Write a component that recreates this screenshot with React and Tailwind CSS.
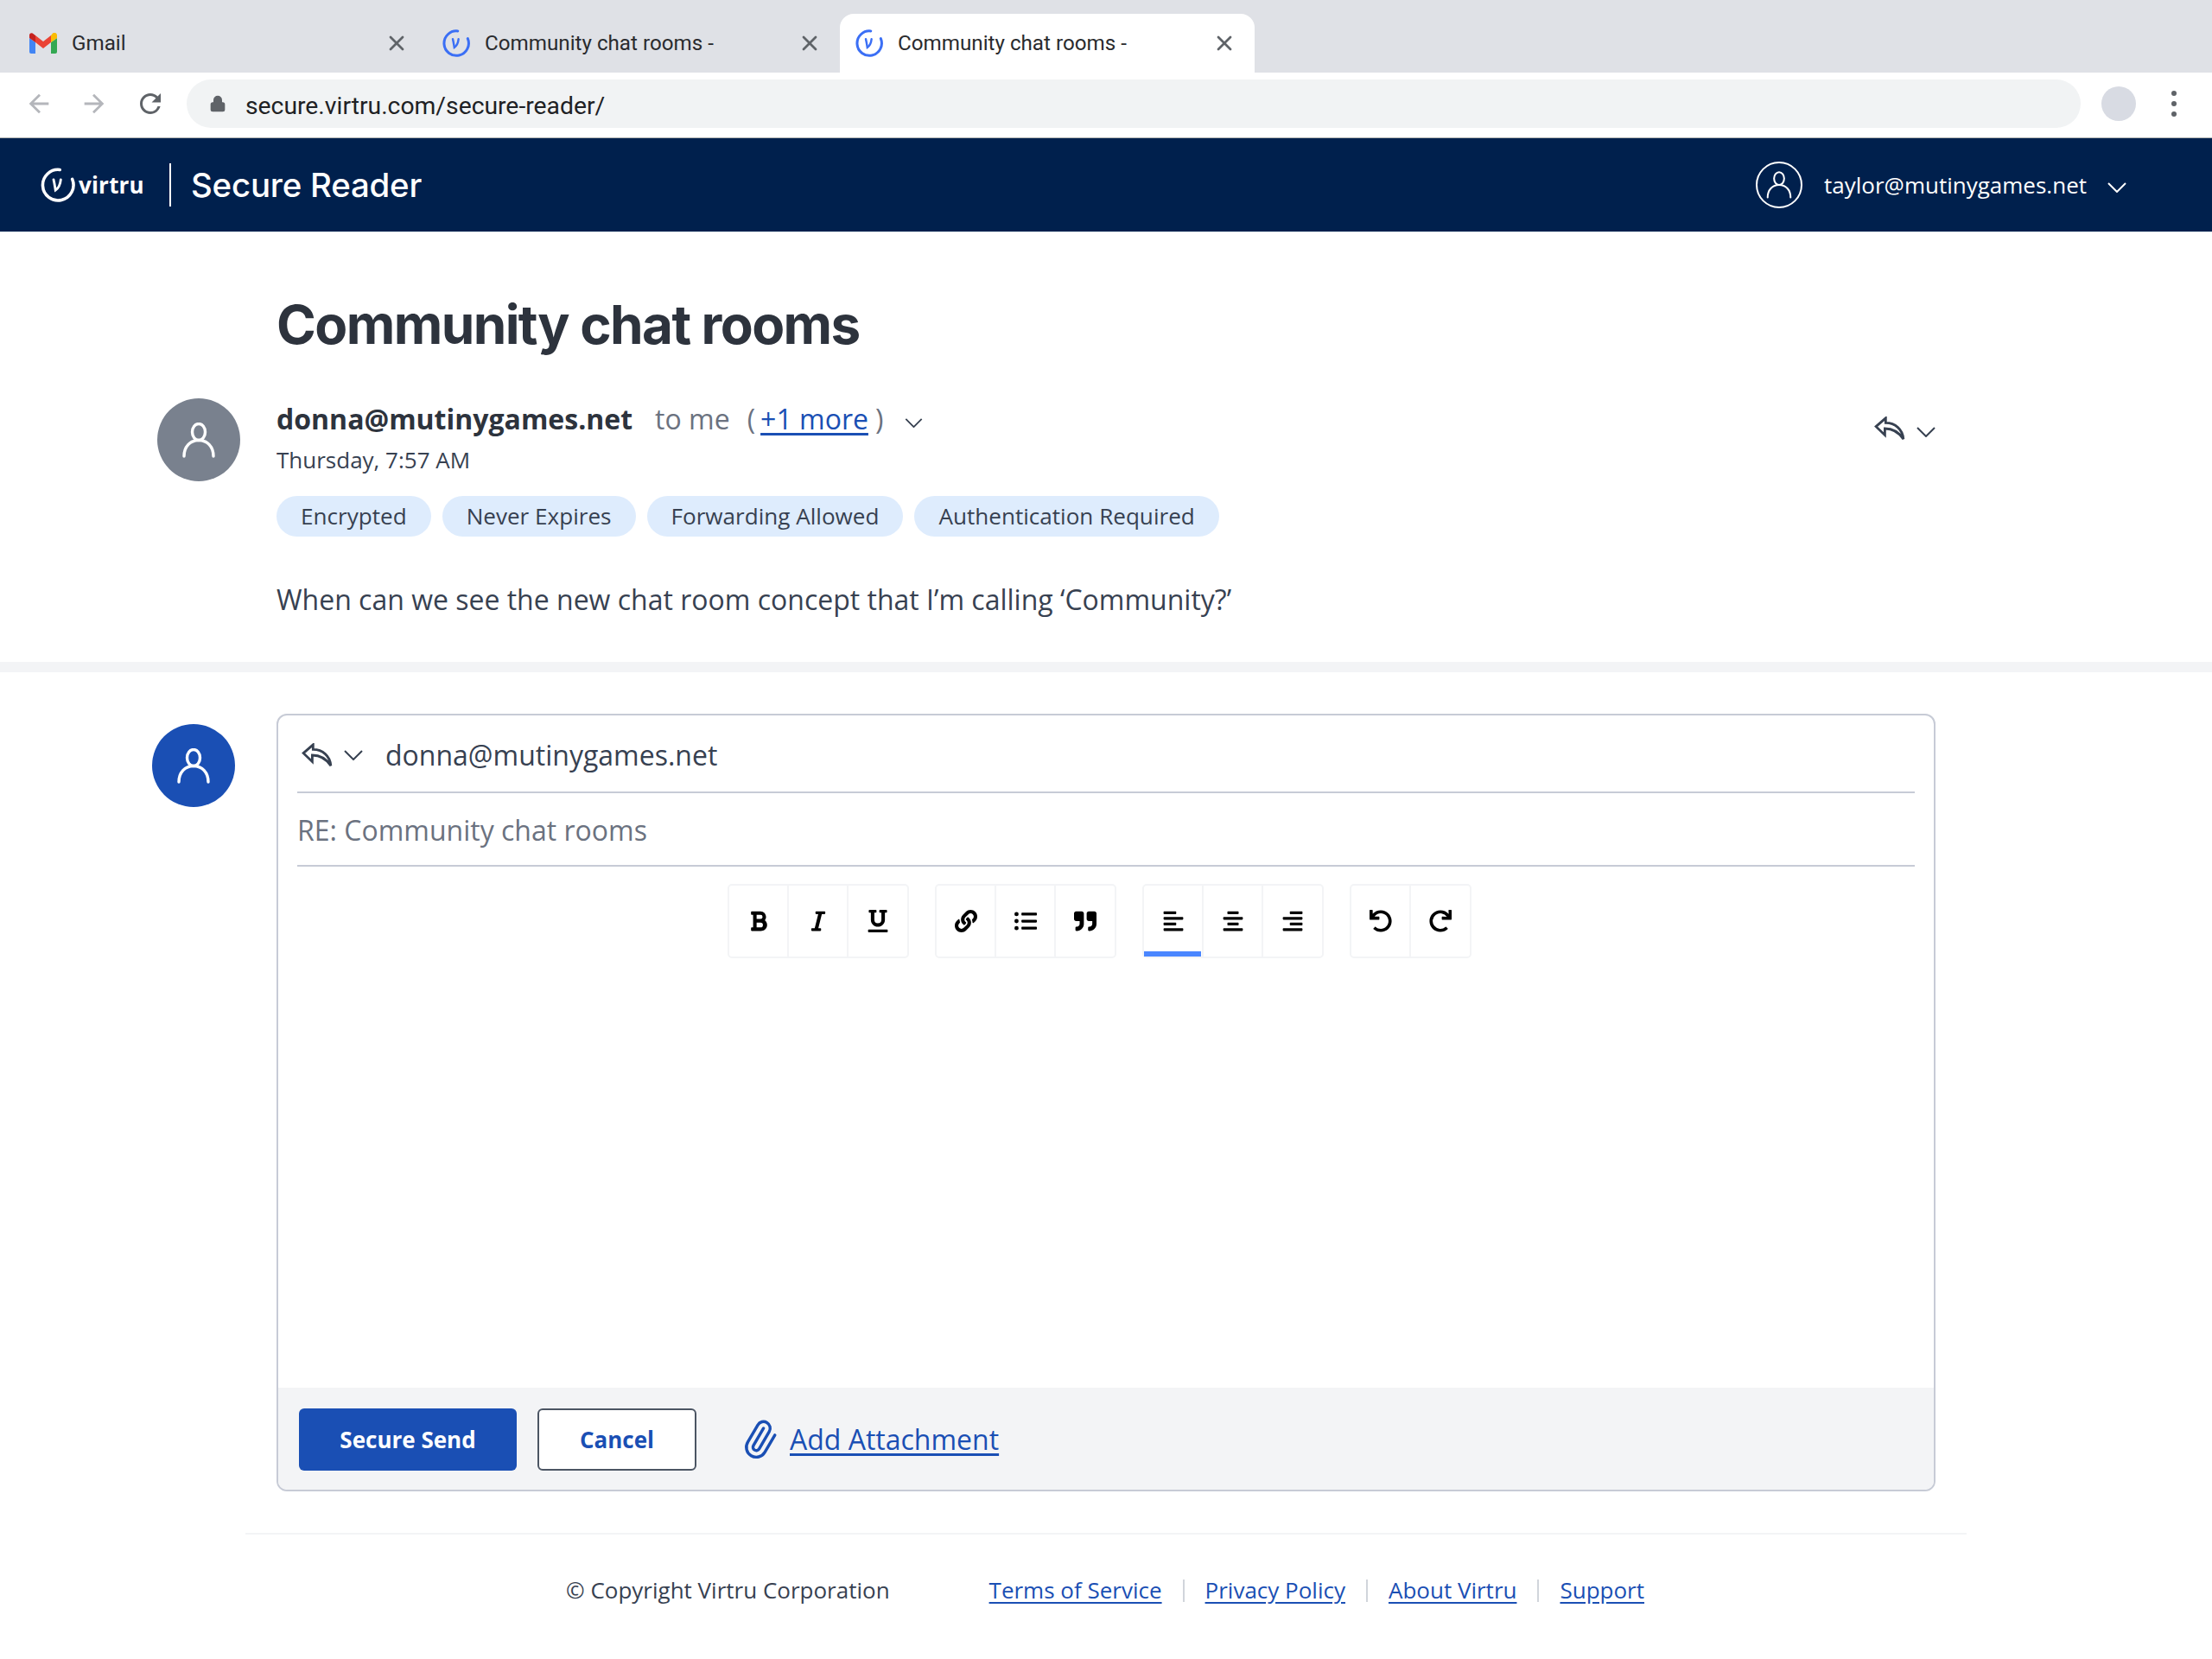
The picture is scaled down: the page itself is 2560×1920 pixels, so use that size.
import React from "react";
import { X, Paperclip, Lock } from "lucide-react";
import { FaBold, FaItalic, FaUnderline, FaLink, FaListUl, FaQuoteRight, FaAlignLeft, FaAlignCenter, FaAlignRight, FaUndo, FaRedo } from "react-icons/fa";

const Caret = ({ className }) => (
  <svg viewBox="0 0 22 12" className={className} fill="none" stroke="currentColor" strokeWidth="2">
    <path d="M1 1l10 10L21 1" />
  </svg>
);

const Reply = ({ className }) => (
  <svg viewBox="0 0 38 30" className={className} fill="none" stroke="#374151" strokeWidth="3" strokeLinejoin="miter">
    <path d="M14 2L2 12.5 13 23v-8c9 0 17 4 23 13-1-12-10-20-22-20z" />
  </svg>
);

const Person = ({ className, sw = 3.4 }) => (
  <svg viewBox="0 0 38 41" className={className} fill="none" stroke="currentColor" strokeWidth={sw} strokeLinecap="round">
    <ellipse cx="19" cy="11" rx="7.5" ry="9.500" />
    <path d="M2 39c0-11 7-18.500 17-18.500S36 28 36 39" />
  </svg>
);

const VirtruMark = ({ className, color, strokeWidth = 3 }) => (
  <svg viewBox="0 0 36 36" className={className} fill="none" stroke={color} strokeWidth={strokeWidth}>
    <path d="M20 2.200A16 16 0 1 0 33 12" strokeLinecap="round" />
    <path d="M13.500 12.500c1 4 1.500 8 2 11 3-2 5-6 5.500-11" strokeWidth={strokeWidth * 0.8} strokeLinecap="round" />
  </svg>
);

const Gmail = () => (
  <svg viewBox="0 0 32 24" className="w-[32px] h-[24px]">
    <path d="M2 24h5V11L0 6v16a2 2 0 0 0 2 2z" fill="#4285f4" />
    <path d="M25 24h5a2 2 0 0 0 2-2V6l-7 5z" fill="#34a853" />
    <path d="M25 3v8l7-5V3c0-3-3-4-5-2.500z" fill="#fbbc04" />
    <path d="M7 11V3l9 7 9-7v8l-9 7z" fill="#ea4335" />
    <path d="M0 3v3l7 5V3L5 1.500C3-.5 0 0 0 3z" fill="#c5221f" />
  </svg>
);

const Mat = ({ d, fill, className }) => (
  <svg viewBox="0 0 24 24" className={className} fill={fill}><path d={d} /></svg>
);

const Tab = ({ icon, label, active }) => (
  <div className={`flex items-center h-[68px] pl-[18px] pr-[21px] ${active ? "w-[480px] bg-white rounded-t-[16px]" : "w-[478px]"}`}>
    <div className="w-[32px] flex justify-center shrink-0">{icon}</div>
    <span className="ml-[17px] text-[24.2px] text-[#2a2b2e] font-['Roboto',sans-serif] whitespace-nowrap">{label}</span>
    <X className="ml-auto text-[#5f6368]" size={28} strokeWidth={2.4} />
  </div>
);

const Tag = ({ children }) => (
  <span className="h-[47px] px-[28px] flex items-center rounded-full bg-[#deecfd] text-[#374151] text-[26.1px]">{children}</span>
);

const ToolBtn = ({ children, active, last }) => (
  <div className={`relative h-full flex items-center justify-center text-black ${last ? "w-[68px]" : "w-[69px] border-r-2 border-[#f3f4f6]"}`}>
    {children}
    {active && <div className="absolute left-0 right-[1px] bottom-0 h-[6px] bg-[#4a86ff]" />}
  </div>
);

const Group = ({ children }) => (
  <div className="flex h-[86px] border-2 border-[#f3f4f6] rounded-[5px]">{children}</div>
);

const FooterLink = ({ children }) => (
  <a className="text-[#1a4fb4] underline underline-offset-[4px]">{children}</a>
);
const Sep = () => <span className="w-[2px] h-[26px] bg-[#d1d5db] mx-[24px]" />;

export default function App() {
  const S = 26;
  return (
    <div className="w-[2560px] h-[1920px] bg-white overflow-hidden font-['Open_Sans',sans-serif] text-[#374151]">
      {/* tab strip */}
      <div className="h-[84px] bg-[#dfe1e6] pt-[16px] flex pl-[16px]">
        <Tab icon={<Gmail />} label="Gmail" />
        <Tab icon={<VirtruMark className="w-[32px] h-[32px]" color="#3b6ff5" strokeWidth={3.4} />} label="Community chat rooms -" />
        <Tab active icon={<VirtruMark className="w-[32px] h-[32px]" color="#3b6ff5" strokeWidth={3.4} />} label="Community chat rooms -" />
      </div>
      {/* url row */}
      <div className="h-[76px] flex items-center border-b border-[#b0b0b0] pb-[3px]">
        <div className="w-[216px] flex items-center pl-[28px] gap-[30px] shrink-0">
          <Mat className="w-[34px] h-[34px]" fill="#b4b6bb" d="M20 11H7.830l5.590-5.590L12 4l-8 8 8 8 1.410-1.410L7.830 13H20v-2z" />
          <Mat className="w-[34px] h-[34px]" fill="#b4b6bb" d="M12 4l-1.410 1.410L16.170 11H4v2h12.170l-5.580 5.590L12 20l8-8z" />
          <Mat className="w-[36px] h-[36px]" fill="#5f6368" d="M17.650 6.350A7.958 7.958 0 0 0 12 4c-4.420 0-7.990 3.580-7.990 8s3.570 8 7.990 8c3.730 0 6.840-2.550 7.730-6h-2.080A5.990 5.990 0 0 1 12 18c-3.310 0-6-2.690-6-6s2.690-6 6-6c1.660 0 3.140.690 4.220 1.780L13 11h7V4l-2.350 2.350z" />
        </div>
        <div className="w-[2192px] h-[56px] bg-[#f1f3f4] rounded-full flex items-center pl-[26px]">
          <Lock size={20} fill="#5f6368" className="text-[#5f6368]" />
          <span className="ml-[22px] pt-[6px] text-[28.3px] text-[#202124] font-['Roboto',sans-serif]">secure.virtru.com/secure-reader/</span>
        </div>
        <div className="ml-[24px] w-[40px] h-[40px] rounded-full bg-[#d8dbe3]" />
        <div className="ml-[41px] flex flex-col gap-[6px]">
          <span className="w-[6px] h-[6px] rounded-full bg-[#5f6368]" />
          <span className="w-[6px] h-[6px] rounded-full bg-[#5f6368]" />
          <span className="w-[6px] h-[6px] rounded-full bg-[#5f6368]" />
        </div>
      </div>
      {/* app header */}
      <div className="h-[108px] bg-[#00204d] flex items-center pl-[47px] text-white">
        <VirtruMark className="w-[40px] h-[40px] shrink-0" color="#fff" strokeWidth={3.2} />
        <span className="ml-[4px] w-[73px] text-[26px] font-bold tracking-[0.2px]">virtru</span>
        <div className="ml-[32px] w-[2px] h-[50px] bg-white" />
        <span className="ml-[23px] mt-[2px] text-[38.400px] font-medium font-['Inter',sans-serif] tracking-[-0.2px]">Secure Reader</span>
        <div className="ml-auto w-[54px] h-[54px] rounded-full border-2 border-white flex items-center justify-center">
          <Person className="w-[30px] h-[32px] text-white" sw={2.6} />
        </div>
        <span className="ml-[25px] text-[26px]">taylor@mutinygames.net</span>
        <Caret className="ml-[24px] mr-[99px] mt-[6px] w-[22px] h-[12px] text-white" />
      </div>

      {/* message */}
      <div className="h-[498px] pl-[182px] pr-[320px] flex flex-col">
        <h1 className="mt-[70px] ml-[138px] text-[62px] leading-[76px] font-bold font-['Inter',sans-serif] tracking-[-1.6px] text-[#2d333d]">Community chat rooms</h1>
        <div className="mt-[47px] flex">
          <div className="w-[96px] h-[96px] rounded-full bg-[#79818e] flex items-center justify-center text-white shrink-0">
            <Person className="w-[38px] h-[41px]" />
          </div>
          <div className="ml-[42px] flex-1 flex flex-col">
            <div className="flex items-center h-[48px]">
              <span className="text-[32px] font-bold text-[#2d333d]">donna@mutinygames.net</span>
              <span className="ml-[26px] text-[32px] text-[#6b7280]">to me</span>
              <span className="ml-[20px] text-[32px] text-[#6b7280]">(</span>
              <a className="ml-[6px] text-[32px] text-[#1a4fb4] underline underline-offset-[4px]">+1 more</a>
              <span className="ml-[8px] text-[32px] text-[#6b7280]">)</span>
              <Caret className="ml-[25px] mt-[9px] w-[21px] h-[11px]" />
              <Reply className="ml-auto mt-[22px] w-[36px] h-[28px]" />
              <Caret className="ml-[13px] mt-[30px] w-[22px] h-[12px]" />
            </div>
            <div className="mt-[5px] text-[26px] leading-[36px]">Thursday, 7:57 AM</div>
            <div className="mt-[24px] flex gap-[13px]">
              <Tag>Encrypted</Tag>
              <Tag>Never Expires</Tag>
              <Tag>Forwarding Allowed</Tag>
              <Tag>Authentication Required</Tag>
            </div>
            <p className="mt-[51px] text-[32px] leading-[44px]">When can we see the new chat room concept that I’m calling ‘Community?’</p>
          </div>
        </div>
      </div>
      <div className="h-[12px] bg-[#f3f4f6]" />

      {/* reply */}
      <div className="pl-[176px] pt-[48px] flex items-start">
        <div className="mt-[12px] w-[96px] h-[96px] rounded-full bg-[#1a4fb4] flex items-center justify-center text-white shrink-0">
          <Person className="w-[38px] h-[41px]" />
        </div>
        <div className="ml-[48px] w-[1920px] h-[900px] border-2 border-[#c7cbd6] rounded-[12px] flex flex-col overflow-hidden">
          <div className="mx-[22px] h-[90px] pt-[3px] border-b-2 border-[#c7cbd6] flex items-center shrink-0">
            <Reply className="ml-[5px] w-[36px] h-[28px]" />
            <Caret className="ml-[13px] w-[22px] h-[12px]" />
            <span className="ml-[26px] text-[32px]">donna@mutinygames.net</span>
          </div>
          <div className="mx-[22px] h-[85px] pt-[2px] border-b-2 border-[#c7cbd6] flex items-center text-[32px] text-[#6b7280] shrink-0">RE: Community chat rooms</div>
          <div className="flex-1 pt-[20px] pl-[520px]">
            <div className="flex gap-[30px]">
              <Group>
                <ToolBtn><FaBold size={S} /></ToolBtn>
                <ToolBtn><FaItalic size={S} /></ToolBtn>
                <ToolBtn last><FaUnderline size={S} /></ToolBtn>
              </Group>
              <Group>
                <ToolBtn><FaLink size={S} /></ToolBtn>
                <ToolBtn><FaListUl size={S} /></ToolBtn>
                <ToolBtn last><FaQuoteRight size={S} /></ToolBtn>
              </Group>
              <Group>
                <ToolBtn active><FaAlignLeft size={S} /></ToolBtn>
                <ToolBtn><FaAlignCenter size={S} /></ToolBtn>
                <ToolBtn last><FaAlignRight size={S} /></ToolBtn>
              </Group>
              <Group>
                <ToolBtn><FaUndo size={S} /></ToolBtn>
                <ToolBtn last><FaRedo size={S} /></ToolBtn>
              </Group>
            </div>
          </div>
          <div className="h-[118px] bg-[#f3f4f6] flex items-center pl-[24px] pt-[2px] shrink-0">
            <button className="w-[252px] h-[72px] bg-[#1a4fb4] rounded-[6px] text-white text-[26px] font-bold">Secure Send</button>
            <button className="ml-[24px] w-[184px] h-[72px] bg-white border-2 border-[#4b5563] rounded-[6px] text-[#1a4fb4] text-[26px] font-bold">Cancel</button>
            <Paperclip className="ml-[50px] rotate-[-14deg] text-[#1a4fb4]" size={46} strokeWidth={1.8} />
            <a className="ml-[12px] text-[32px] text-[#1a4fb4] underline underline-offset-[4px]">Add Attachment</a>
          </div>
        </div>
      </div>

      {/* footer */}
      <div className="ml-[284px] w-[1992px] mt-[48px] border-t-2 border-[#f3f4f6] pl-[371px] pt-[45px] flex items-center text-[26px]">
        <span>© Copyright Virtru Corporation</span>
        <div className="ml-[115px] flex items-center">
          <FooterLink>Terms of Service</FooterLink>
          <Sep />
          <FooterLink>Privacy Policy</FooterLink>
          <Sep />
          <FooterLink>About Virtru</FooterLink>
          <Sep />
          <FooterLink>Support</FooterLink>
        </div>
      </div>
    </div>
  );
}
